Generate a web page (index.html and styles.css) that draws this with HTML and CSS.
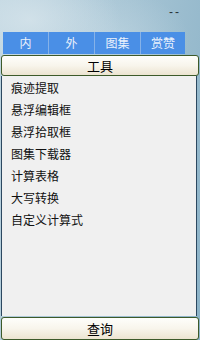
FILE: index.html
```html
<!DOCTYPE html>
<html lang="zh-CN">
<head>
<meta charset="utf-8">
<title>工具</title>
<link rel="stylesheet" href="styles.css">
</head>
<body>
<div class="app">
  <div class="titlebar"><span class="minimize">--</span></div>
  <div class="tabs">
    <div class="tab">内</div>
    <div class="tab">外</div>
    <div class="tab">图集</div>
    <div class="tab">赏赞</div>
  </div>
  <div class="btn btn-top">工具</div>
  <div class="panel">
    <div class="item">痕迹提取</div>
    <div class="item">悬浮编辑框</div>
    <div class="item">悬浮拾取框</div>
    <div class="item">图集下载器</div>
    <div class="item">计算表格</div>
    <div class="item">大写转换</div>
    <div class="item">自定义计算式</div>
  </div>
  <div class="btn btn-bottom">查询</div>
</div>
</body>
</html>
```
FILE: styles.css
```css
html, body {
  margin: 0;
  padding: 0;
}
body {
  width: 200px;
  height: 340px;
  overflow: hidden;
  font-family: "Noto Sans CJK SC", "Liberation Sans", sans-serif;
  font-size: 12px;
  color: #111;
  background:
    radial-gradient(ellipse 90px 60px at 30px 20px, rgba(220,232,238,0.7), rgba(220,232,238,0) 100%),
    radial-gradient(ellipse 80px 50px at 110px 40px, rgba(200,220,230,0.5), rgba(200,220,230,0) 100%),
    linear-gradient(100deg, #bcd3df 0%, #a6c4d4 50%, #8bb2c7 100%);
}
.app {
  display: flex;
  flex-direction: column;
  height: 340px;
}
.titlebar {
  height: 32px;
  display: flex;
  justify-content: flex-end;
  align-items: flex-start;
  padding-right: 19px;
  box-sizing: border-box;
}
.minimize {
  margin-top: 5px;
  font-family: "Liberation Sans", sans-serif;
  font-size: 12px;
  line-height: 14px;
  letter-spacing: 2px;
  color: #2a3238;
}
.tabs {
  margin-left: 3px;
  width: 182px;
  height: 22px;
  display: grid;
  grid-template-columns: 45px 46px 46px 45px;
  background: #4a8fe6;
}
.tab {
  display: flex;
  align-items: center;
  justify-content: center;
  color: #eaf2fc;
  font-size: 12px;
  line-height: 22px;
}
.tab + .tab {
  border-left: 1px solid #86b2e8;
}
.btn {
  margin-left: 1px;
  width: 198px;
  box-sizing: border-box;
  border: 1px solid #3d5a2a;
  border-radius: 3px;
  background: linear-gradient(#fefefb 0%, #f8f5ec 50%, #ece4d1 100%);
  display: flex;
  align-items: center;
  justify-content: center;
  font-size: 13px;
  color: #000;
}
.btn-top {
  margin-top: 1px;
  height: 21px;
}
.btn-bottom {
  height: 23px;
  margin-top: 1px;
}
.panel {
  margin-left: 1px;
  width: 196px;
  height: 240px;
  box-sizing: border-box;
  background: #f0f0f0;
  border-left: 1px solid #2c4860;
  border-right: 1px solid #2c4860;
  display: flex;
  flex-direction: column;
  padding-top: 1px;
}
.item {
  height: 22px;
  line-height: 22px;
  padding-left: 9px;
  font-size: 12px;
  color: #111;
}
```
